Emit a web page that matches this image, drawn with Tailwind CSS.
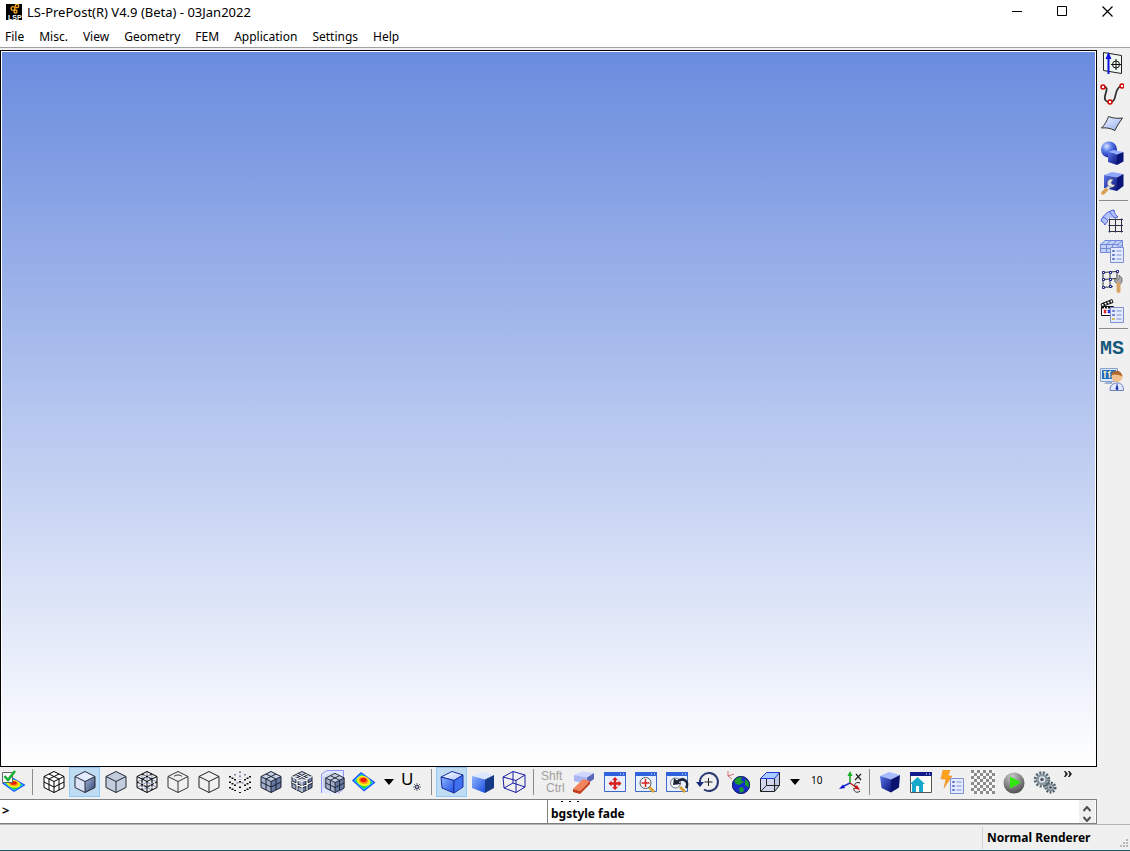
<!DOCTYPE html>
<html lang="en">
<head>
    <meta charset="UTF-8">
    <title>LS-PrePost(R) V4.9 (Beta) - 03Jan2022</title>
    <meta name="viewport" content="width=device-width, initial-scale=1">
    <script src="https://cdn.jsdelivr.net/npm/@tailwindcss/browser@4"></script>
</head>
<body class="h-screen flex flex-col overflow-hidden bg-[#f0f0f0] text-black text-[12px] leading-4 font-['Noto_Sans','Open_Sans',sans-serif]">
    <!-- Shared shapes and gradients -->
    <svg class="absolute w-0 h-0" aria-hidden="true">
        <defs>
            <linearGradient id="steel" x1="0" y1="0" x2="1" y2="1"><stop offset="0" stop-color="#a9b8d8"/><stop offset="1" stop-color="#2d4474"/></linearGradient>
            <linearGradient id="blueFace" x1="0" y1="0" x2="1" y2="1"><stop offset="0" stop-color="#8fb4ff"/><stop offset="1" stop-color="#1d4fe0"/></linearGradient>
            <linearGradient id="lightTop" x1="0" y1="0" x2="1" y2="1"><stop offset="0" stop-color="#ffffff"/><stop offset="1" stop-color="#a9c2ff"/></linearGradient>
            <linearGradient id="navyFace" x1="0" y1="0" x2="1" y2="1"><stop offset="0" stop-color="#5a74e8"/><stop offset="1" stop-color="#0a1478"/></linearGradient>
            <radialGradient id="ball" cx=".35" cy=".3" r=".75"><stop offset="0" stop-color="#dfe8ff"/><stop offset=".4" stop-color="#5f80ee"/><stop offset="1" stop-color="#0b1aa0"/></radialGradient>
            <radialGradient id="greyBall" cx=".4" cy=".2" r=".85"><stop offset="0" stop-color="#c8c8c8"/><stop offset="1" stop-color="#4a4a4a"/></radialGradient>
            <linearGradient id="sheet" x1="0" y1="0" x2="1" y2="1"><stop offset="0" stop-color="#f4f8ff"/><stop offset="1" stop-color="#8fabf0"/></linearGradient>
            <symbol id="edges" viewBox="0 0 24 24"><path d="M12 1.500 22 6.500V17.500L12 22.500 2 17.500V6.500ZM2 6.500 12 11.500 22 6.500M12 11.500V22.500" fill="none" stroke="currentColor" stroke-linejoin="round"/></symbol>
            <symbol id="grid" viewBox="0 0 24 24"><path d="M7 4 17 9V20M17 4 7 9V20M2 12 12 17 22 12" fill="none" stroke="currentColor"/></symbol>
            <symbol id="shaded" viewBox="0 0 24 24"><path d="M12 1.500 22 6.500 12 11.500 2 6.500Z" fill="#c6d0e4"/><path d="M2 6.500 12 11.500V22.500L2 17.500Z" fill="#a3b1cd"/><path d="M12 11.500 22 6.500V17.500L12 22.500Z" fill="#6679a0"/></symbol>
            <symbol id="fringe" viewBox="0 0 24 24" preserveAspectRatio="none">
                <path d="M0 10.500 9 2 23.500 12.500 12 21.500Z" fill="#1a4cff"/><path d="M1.800 10.500 9.300 3.600 21.500 12.500 12 20Z" fill="#1ecbff"/>
                <path d="M3.200 10.500 9.500 4.600 20 12.500 12 18.800Z" fill="#27d83c"/><ellipse cx="11.500" cy="11" rx="7" ry="4.900" transform="rotate(18 11.500 11)" fill="#f6f01c"/>
                <ellipse cx="11.500" cy="10.500" rx="4.800" ry="3.400" transform="rotate(18 11.500 10.500)" fill="#ff9a10"/><ellipse cx="11.500" cy="10" rx="3.200" ry="2.200" fill="#f01808"/>
            </symbol>
            <symbol id="navyCube" viewBox="0 0 24 24"><path d="M2 6 11 2 22 5 13 9.500Z" fill="#a7bbff"/><path d="M2 6 13 9.500V22.500L3.500 18Z" fill="url(#navyFace)"/><path d="M13 9.500 22 5 21 17.500 13 22.500Z" fill="#0a1270"/></symbol>
            <symbol id="list" viewBox="0 0 24 24"><path d="M10.500 8.500H23.500V23.500H10.500Z" fill="#e4ebff" stroke="#7f8fd0"/><path d="M12.500 11.500h2v1h-2zM12.500 15.500h2v1h-2zM12.500 19.500h2v1h-2z" fill="#fff" stroke="#6076c8"/><path d="M16.500 12H21.500M16.500 16H21.500M16.500 20H21.500" stroke="#7f8fd0"/></symbol>
            <symbol id="window" viewBox="0 0 24 24"><path d="M1.500 2.500H22.500V21.500H1.500Z" fill="#e8f0ff" stroke="#3f67c4"/><path d="M1 2H23V6H1Z" fill="#2f62dc"/><path d="M17 4H18M20 4H21" stroke="#fff"/></symbol>
        </defs>
    </svg>

    <!-- Title bar -->
    <header class="flex items-center justify-between bg-white h-6 shrink-0 pr-px">
        <div class="flex items-center gap-[5px] pl-1.5">
            <svg class="size-4" viewBox="0 0 16 16" aria-hidden="true">
                <rect width="16" height="16" fill="#000"/>
                <g fill="none" stroke="#f5a21c" stroke-width="1.400"><circle cx="11" cy="2" r="1.700"/><circle cx="7" cy="4.500" r="1.900"/><circle cx="9.500" cy="7.500" r="1.500"/></g>
                <text x="2" y="15.500" font-size="7" font-weight="700" font-family="Liberation Sans" fill="#fff">LSP</text>
            </svg>
            <h1 class="text-[13px]">LS-PrePost(R) V4.9 (Beta) - 03Jan2022</h1>
        </div>
        <div class="flex">
            <button aria-label="Minimize" class="w-[45px] h-6 flex items-center justify-center"><svg class="size-3" viewBox="0 0 12 12"><path d="M1 5.500H11" stroke="#000"/></svg></button>
            <button aria-label="Maximize" class="w-[45px] h-6 flex items-center justify-center"><svg class="size-3" viewBox="0 0 12 12"><path d="M1.500 .5H10.500V9.500H1.500Z" fill="none" stroke="#000"/></svg></button>
            <button aria-label="Close" class="w-[45px] h-6 flex items-center justify-center"><svg class="size-3" viewBox="0 0 12 12"><path d="M1.500 .5 11.500 10.500M11.500 .5 1.500 10.500" stroke="#000" stroke-width="1.200"/></svg></button>
        </div>
    </header>

    <!-- Menu -->
    <nav class="flex items-center gap-[15px] bg-white h-[23px] pl-[5px] pt-[3px] shrink-0">
        <a href="#">File</a>
        <a href="#">Misc.</a>
        <a href="#">View</a>
        <a href="#">Geometry</a>
        <a href="#">FEM</a>
        <a href="#">Application</a>
        <a href="#">Settings</a>
        <a href="#">Help</a>
    </nav>

    <div class="flex flex-1 min-h-0 border-t border-[#a0a0a0]">
        <!-- Graphics view -->
        <div class="flex flex-col flex-1 min-w-0 pt-0.5">
            <main class="flex-1 border border-black bg-white p-px"><div class="h-full bg-linear-to-b/srgb from-[#6a8cde] to-white"></div></main>
        </div>

        <!-- Right toolbar -->
        <aside class="w-[33px] shrink-0 flex flex-col items-start">
            <button aria-label="Reference geometry" class="w-[30px] h-[30px] flex items-center justify-center"><svg class="size-6" viewBox="0 0 24 24">
                <path d="M3.500 1.500 21.500 4.500V22.500L3.500 19.500Z" fill="#eef8ee" stroke="#222"/><path d="M8.500 23V5" stroke="#1010e0" stroke-width="2"/><path d="M8.500 1 11.500 8H5.500Z" fill="#1010e0"/><circle cx="16" cy="13.500" r="3.500" fill="none" stroke="#111"/><path d="M16 8V19M11 13.500H21" stroke="#111"/></svg></button>
            <button aria-label="Curve" class="w-[30px] h-[30px] flex items-center justify-center"><svg class="size-6" viewBox="0 0 24 24">
                <path d="M3 6C9 5 6 11 5 15 4 19 6 21 10 21 18 21 13 8 21 5" fill="none" stroke="#333" stroke-width="1.800"/><g fill="#fff" stroke="#d00000" stroke-width="1.500"><circle cx="3" cy="6" r="2"/><circle cx="10" cy="21" r="2"/><circle cx="22" cy="5" r="2"/></g></svg></button>
            <button aria-label="Surface" class="w-[30px] h-[30px] flex items-center justify-center"><svg class="size-6" viewBox="0 0 24 24">
                <path d="M1.500 17C4.500 14 7 10 8.500 5.500 13 7.500 18 7.500 22.500 7 20 11 17 14.500 15 19.500 10 17 6 16.500 1.500 17Z" fill="url(#sheet)" stroke="#333"/></svg></button>
            <button aria-label="Solid" class="w-[30px] h-[30px] flex items-center justify-center"><svg class="size-6" viewBox="0 0 24 24">
                <circle cx="9" cy="8.500" r="8" fill="url(#ball)"/><path d="M8 11 14 9 23.500 11 17 13.500Z" fill="#98b0ff"/><path d="M8 11 17 13.500V24L8 21Z" fill="url(#navyFace)"/><path d="M17 13.500 23.500 11V20.500L17 24Z" fill="#0a1478"/></svg></button>
            <button aria-label="Geometry tools" class="w-[30px] h-[30px] flex items-center justify-center"><svg class="size-6" viewBox="0 0 24 24">
                <path d="M4 4 12 1 23.500 3 17 6.500Z" fill="#8fa8f8"/><path d="M4 4 17 6.500V20L4 17Z" fill="url(#navyFace)"/><path d="M17 6.500 23.500 3V15L17 20Z" fill="#0a1478"/><path d="M3 22 7 18" stroke="#d9a050" stroke-width="3.500" stroke-linecap="round"/><path d="M7 18 11 14" stroke="#d8d8d8" stroke-width="3"/><path d="M13 8.500A4 4 0 1 0 15 14L12 13.500 11 11.500Z" fill="#e8e8e8" stroke="#777" stroke-width=".6"/></svg></button>
            <hr class="w-[29px] ml-0.5 mt-0.5 mb-[5px] border-[#8c8c8c]">
            <button aria-label="Element mesh" class="w-[30px] h-[30px] flex items-center justify-center"><svg class="size-6" viewBox="0 0 24 24">
                <path d="M1 12C3 6 8 2 14 1 14 5 17 7 18 8 12 9 7 12 5 16 4 13 2 13 1 12Z" fill="#b4c2fc" stroke="#4858d8"/><path d="M3 8C6 9 7 11 8 12M10 3C11 6 14 8 15 9" fill="none" stroke="#5060e0"/><path d="M8 9H23V24H8Z" fill="#eee"/><path d="M9 10.500H23M9 16.500H23M9 22.500H23M9.500 10V23M15.500 10V23M21.500 10V23" stroke="#333"/><path d="M9 10h1v1H9zM15 10h1v1h-1zM21 10h1v1h-1zM9 16h1v1H9zM15 16h1v1h-1zM21 16h1v1h-1zM9 22h1v1H9zM15 22h1v1h-1zM21 22h1v1h-1z" fill="#8890d8" stroke="#23286a"/></svg></button>
            <button aria-label="Model and part" class="w-[30px] h-[30px] flex items-center justify-center"><svg class="size-6" viewBox="0 0 24 24">
                <path d="M.5 5.500 5 1.500H22.500V9L18 13.500H.5Z" fill="#c3d0fa" stroke="#7088d8"/><path d="M.5 5.500H18L22.500 1.500M18 5.500V13M.5 9.500H18L22.500 5.500M6.500 5.500V13M12.500 5.500V13M6.500 5.500 11 1.500M12.500 5.500 17 1.500" fill="none" stroke="#7088d8"/><use href="#list"/></svg></button>
            <button aria-label="Element tools" class="w-[30px] h-[30px] flex items-center justify-center"><svg class="size-6" viewBox="0 0 24 24">
                <path d="M3 3.500 17 2.500M3 10.500 16 9.500M3 18.500 13 17.500M3 3V18M10 3V18M17 2V10" stroke="#333"/><g fill="#fff" stroke="#1c2390"><path d="M2.500 2.500h2v2h-2zM9.500 2.500h2v2h-2zM16.500 1.500h2v2h-2zM2.500 9.500h2v2h-2zM9.500 9.500h2v2h-2zM2.500 17.500h2v2h-2zM9.500 16.500h2v2h-2z"/></g><path d="M19 6 22 9V13L19.500 16 15 13 14 9 17 11 19 10Z" fill="#aaa" stroke="#555" stroke-width=".7"/><path d="M18.500 15V22" stroke="#d8a568" stroke-width="4" stroke-linecap="round"/></svg></button>
            <button aria-label="Post" class="w-[30px] h-[30px] flex items-center justify-center"><svg class="size-6" viewBox="0 0 24 24">
                <path d="M1 5 12 .5 13 3.500 2 7.500Z" fill="#fff" stroke="#111"/><path d="M3 4 5 6M6 3 8 5M9 2 11 4" stroke="#111" stroke-width="1.500"/><path d="M1.500 7.500H13.500V16.500H1.500Z" fill="#fff" stroke="#111"/><path d="M2 8.500H14" stroke="#111" stroke-width="2" stroke-dasharray="2 1"/><path d="M4 11 6 14M6 11 4 14" stroke="#e02020" stroke-width="1.500"/><path d="M8 11 10 14M10 11 8 14" stroke="#2030e0" stroke-width="1.500"/><use href="#list"/><path d="M12.500 19.500h2v1h-2z" stroke="#e8d040"/></svg></button>
            <hr class="w-[29px] ml-0.5 mt-0.5 mb-[5px] border-[#8c8c8c]">
            <button class="w-[30px] h-[30px] flex items-center justify-center text-[20px] leading-6 font-bold text-[#155a7c] font-['Liberation_Mono',monospace]">MS</button>
            <button aria-label="Favorites" class="w-[30px] h-[30px] flex items-center justify-center"><svg class="size-6" viewBox="0 0 24 24">
                <path d="M.5 1.500H17.500V14.500H.5Z" fill="#dceaff" stroke="#8aa0c8"/><path d="M2 3H16V12H2Z" fill="#1f6fc0"/><path d="M5 4V11M3.500 5H6.500M9.500 4V11M8 6 11 4" stroke="#f5e6c0" stroke-width="1.500"/><path d="M6 15H12V17H4Z" fill="#9fb0d0"/><circle cx="17" cy="9.500" r="5.500" fill="#f0c090"/><path d="M11 8.500C12 2.500 21 1.500 22.500 9.500 19 7.500 14 6.500 11 8.500Z" fill="#b0662c"/><path d="M10 23.500C10 18 13 16 17 16S23.500 18 23.500 23.500Z" fill="#dfe8ff" stroke="#7080b8"/><path d="M17 16 18.500 22 17 23.500 15.500 22Z" fill="#2038b0"/></svg></button>
        </aside>
    </div>

    <!-- Bottom toolbar -->
    <div class="flex items-start h-8 shrink-0" role="toolbar" aria-label="Rendering">
        <button aria-label="Fringe on" class="w-7 h-[30px] flex items-center justify-center"><svg class="size-6" viewBox="0 0 24 24">
            <use href="#fringe" x="0" y="5" width="24" height="19"/><path d="M.5 2.500H10.500V12.500H.5Z" fill="#f8f8f8" stroke="#666"/><path d="M2.500 6 6 10 13 1" fill="none" stroke="#12b030" stroke-width="2.500"/></svg></button>
        <span class="w-px h-[26px] mt-0.5 ml-1 mr-[5px] bg-[#8c8c8c]"></span>
        <button aria-label="Mesh" class="w-[31px] h-[30px] flex items-center justify-center"><svg class="size-6 text-black" viewBox="0 0 24 24"><path d="M12 1.500 22 6.500V17.500L12 22.500 2 17.500V6.500Z" fill="#fff"/><use href="#edges"/><use href="#grid"/></svg></button>
        <button aria-label="Shaded edge" aria-pressed="true" class="w-[31px] h-[30px] flex items-center justify-center bg-[#c0dcf3] border border-[#90c8f6]"><svg class="size-6 text-[#222833]" viewBox="0 0 24 24"><path d="M12 1.500 22 6.500 12 11.500 2 6.500Z" fill="#e6ecff"/><path d="M2 6.500 12 11.500V22.500L2 17.500Z" fill="#dde4fa"/><path d="M12 11.500 22 6.500V17.500L12 22.500Z" fill="url(#steel)"/><use href="#edges"/></svg></button>
        <button aria-label="Flat shaded" class="w-[31px] h-[30px] flex items-center justify-center"><svg class="size-6 text-[#222833]" viewBox="0 0 24 24"><path d="M12 1.500 22 6.500V17.500L12 22.500 2 17.500V6.500Z" fill="#c3ccdd"/><use href="#edges"/></svg></button>
        <button aria-label="Wireframe" class="w-[31px] h-[30px] flex items-center justify-center"><svg class="size-6" viewBox="0 0 24 24"><path d="M12 1V12L2 17.500M12 12 22 17.500M7 4V15L17 20M17 4V15L7 20M2 12 12 7 22 12" fill="none" stroke="#8593ba"/><use href="#edges" class="text-black"/><use href="#grid" class="text-black" stroke-dasharray="3 1"/></svg></button>
        <button aria-label="Feature line" class="w-[31px] h-[30px] flex items-center justify-center"><svg class="size-6 text-[#333]" viewBox="0 0 24 24"><use href="#edges"/><path d="M8 6.500C10 4.500 14 4.500 16 6.500" fill="none" stroke="#333"/></svg></button>
        <button aria-label="Edge" class="w-[31px] h-[30px] flex items-center justify-center"><svg class="size-6 text-[#222]" viewBox="0 0 24 24"><use href="#edges"/></svg></button>
        <button aria-label="Grid points" class="w-[31px] h-[30px] flex items-center justify-center"><svg class="size-6" viewBox="0 0 24 24" fill="none" stroke-width="2"><path d="M12 1.500V10M7 4V8M17 4V8M9.500 12V14M14.500 12V14" stroke="#7a86a8" stroke-dasharray="1.500 2.500"/><path d="M2 6V18.500M22 6V18.500M7 9V21M17 9V21M12 11V23M4.500 7.500V20M19.500 7.500V20" stroke="#111" stroke-dasharray="1.500 4"/></svg></button>
        <button aria-label="Shaded mesh" class="w-[31px] h-[30px] flex items-center justify-center"><svg class="size-6 text-[#1a2030]" viewBox="0 0 24 24"><use href="#shaded"/><use href="#edges"/><use href="#grid"/></svg></button>
        <button aria-label="Shrink" class="w-[31px] h-[30px] flex items-center justify-center"><svg class="size-6" viewBox="0 0 24 24"><use href="#shaded"/><g class="text-[#1a2030]" stroke-width="3"><use href="#edges" stroke-width="1"/><use href="#grid"/></g><path d="M7 4 17 9V20M17 4 7 9V20M2 12 12 17 22 12M2 6.500 12 11.500 22 6.500M12 11.500V22" fill="none" stroke="#fff" stroke-width="1.200"/></svg></button>
        <button aria-label="Section" class="w-[31px] h-[30px] flex items-center justify-center"><svg class="size-6" viewBox="0 0 24 24"><path d="M.5 23V4L6 .5H22.500V19L17 23.500" fill="#e2e8ff" stroke="#8d96f0"/><use href="#shaded" opacity=".5"/><g class="text-[#1a2030]"><use href="#shaded" x="3" y="2" width="22" height="22"/><use href="#edges" x="3" y="2" width="22" height="22"/><use href="#grid" x="3" y="2" width="22" height="22"/></g></svg></button>
        <button aria-label="Fringe" class="w-[31px] h-[30px] flex items-center justify-center"><svg class="size-6" viewBox="0 0 24 24"><use href="#fringe"/></svg></button>
        <button aria-label="Fringe options" class="w-5 h-[30px] flex items-center justify-center"><svg class="w-2.5 h-1.5" viewBox="0 0 10 6"><path d="M0 0H10L5 6Z"/></svg></button>
        <button aria-label="Unreferenced nodes" class="w-7 h-[30px] flex items-center pl-0.5"><span class="text-[17px] leading-5 pb-1.5">U</span><svg class="size-2 mt-2.5" viewBox="0 0 8 8"><path d="M4 0V8M0 4H8M1 1 7 7M7 1 1 7" stroke="#667"/><circle cx="4" cy="4" r="1.500" fill="#dfe4ff" stroke="#335"/></svg></button>
        <span class="w-px h-[26px] mt-0.5 mx-1 bg-[#8c8c8c]"></span>
        <button aria-label="Smooth shaded edge" aria-pressed="true" class="w-[31px] h-[30px] flex items-center justify-center bg-[#c0dcf3] border border-[#90c8f6]"><svg class="size-6" viewBox="0 0 24 24" stroke="#1a2ea0" stroke-linejoin="round"><path d="M1 7 12 1.500 23 5 14 10.500Z" fill="url(#lightTop)"/><path d="M1 7 14 10.500V23L2 18Z" fill="url(#blueFace)"/><path d="M14 10.500 23 5V17L14 23Z" fill="#3f70f0"/></svg></button>
        <button aria-label="Smooth shaded" class="w-[31px] h-[30px] flex items-center justify-center"><svg class="size-6" viewBox="0 0 24 24"><path d="M1 6 11 2 23 5 14 9.500Z" fill="#dbe6ff"/><path d="M1 6 14 9.500V23L1 18Z" fill="url(#blueFace)"/><path d="M14 9.500 23 5V18L14 23Z" fill="#173a86"/></svg></button>
        <button aria-label="Smooth wireframe" class="w-[31px] h-[30px] flex items-center justify-center"><svg class="size-6" viewBox="0 0 24 24"><path d="M1 7 11 1.500 23 5 14 10.500ZM1 7 2 18 14 22.500 23 17V5M14 10.500V22.500M11 1.500V13L2 18M11 13 23 17" fill="none" stroke="#1a1ea8"/></svg></button>
        <span class="w-px h-[26px] mt-0.5 mx-1 bg-[#8c8c8c]"></span>
        <button class="w-[30px] h-[30px] flex flex-col pl-[3px] text-left text-[12px] leading-3 pt-[3px] text-[#a0a0a0] font-['Liberation_Sans',sans-serif]"><span>Shft</span><span class="pl-[5px]">Ctrl</span></button>
        <button aria-label="Erase" class="w-[31px] h-[30px] flex items-center justify-center"><svg class="size-6" viewBox="0 0 24 24"><path d="M2 5 10 1.500 22 3 15 7.500Z" fill="#cfd6ff"/><path d="M2 5 15 7.500V14L2 11Z" fill="#a9b6f2"/><path d="M15 7.500 22 3V9L15 14Z" fill="#5968b8"/><path d="M1 19 11 9 18 11 8 21Z" fill="#f4845c"/><path d="M1 19 8 21V24L1 22ZM8 21 18 11V14L8 24Z" fill="#c43e1c"/></svg></button>
        <button aria-label="Auto center" class="w-[31px] h-[30px] flex items-center justify-center"><svg class="size-6" viewBox="0 0 24 24"><use href="#window"/><path d="M12 9V18M7 13.500H17" stroke="#d82020" stroke-width="2.500"/><path d="M12 7 15 10H9ZM12 20 9 17H15ZM5.500 13.500 8.500 10.500V16.500ZM18.500 13.500 15.500 16.500V10.500Z" fill="#d82020"/></svg></button>
        <button aria-label="Zoom in" class="w-[31px] h-[30px] flex items-center justify-center"><svg class="size-6" viewBox="0 0 24 24"><use href="#window"/><path d="M15 17 20 22" stroke="#d8a030" stroke-width="3"/><circle cx="11.500" cy="13" r="5.500" fill="#f4f8ff" stroke="#555"/><path d="M11.500 9V17M7.500 13H15.500" stroke="#d82020" stroke-width="1.500"/></svg></button>
        <button aria-label="Previous view" class="w-[31px] h-[30px] flex items-center justify-center"><svg class="size-6" viewBox="0 0 24 24"><use href="#window"/><path d="M15 17 20 22" stroke="#d8a030" stroke-width="3"/><circle cx="10.500" cy="13" r="5" fill="#f4f8ff" stroke="#777"/><path d="M21 18C25 12 18 6 12 12" fill="none" stroke="#1c2536" stroke-width="2.500"/><path d="M8 15 9 8 16 14Z" fill="#1c2536"/></svg></button>
        <button aria-label="Rotate" class="w-[31px] h-[30px] flex items-center justify-center"><svg class="size-6" viewBox="0 0 24 24"><path d="M4 13A9 9 0 1 1 8 19.500" fill="none" stroke="#2b3a72" stroke-width="2"/><path d="M0 12H8L4 17Z" fill="#1a2c78"/><path d="M12.500 8V16M8.500 12H16.500" stroke="#222"/></svg></button>
        <button aria-label="Global view" class="w-[31px] h-[30px] flex items-center justify-center"><svg class="size-6" viewBox="0 0 24 24"><path d="M1 1V6L5 9M1 6 7 4" fill="none" stroke="#d07070"/><circle cx="14" cy="15" r="9" fill="#1a2cc8"/><path d="M7 11C9 6 13 6 15 7L14 10 17 12 12 15 9 14ZM18 9 22 12 22 18 18 15ZM12 18 16 17 17 21 13 23Z" fill="#1c9c2c"/><circle cx="14" cy="15" r="8.500" fill="none" stroke="#142068"/></svg></button>
        <button aria-label="View orientation" class="w-[31px] h-[30px] flex items-center justify-center"><svg class="size-6" viewBox="0 0 24 24"><path d="M2.500 8.500H16.500V21.500H2.500Z" fill="#d4d8ee"/><path d="M16.500 8.500 21.500 2.500V15.500L16.500 21.500Z" fill="#c0c8e8"/><path d="M2.500 8.500 8.500 2.500H21.500L16.500 8.500Z" fill="#a8ccff" stroke="#2038e0"/><path d="M2.500 8.500V21.500H16.500V8.500M16.500 21.500 21.500 15.500V2.500M8.500 9V15.500H21M8.500 15.500 2.500 21.500" fill="none" stroke="#222"/></svg></button>
        <button aria-label="More views" class="w-5 h-[30px] flex items-center justify-center"><svg class="w-2.5 h-1.5" viewBox="0 0 10 6"><path d="M0 0H10L5 6Z"/></svg></button>
        <button class="w-[30px] h-[30px] flex items-center pl-1.5 pb-1 text-[10px]">10</button>
        <button aria-label="Axis rotation" class="w-[31px] h-[30px] flex items-center justify-center"><svg class="size-6" viewBox="0 0 24 24"><path d="M11 13V4" stroke="#10a020" stroke-width="1.500"/><path d="M11 1 13.500 6H8.500Z" fill="#10b020"/><path d="M11 13 3 17" stroke="#1830d0" stroke-width="1.500"/><path d="M0 19 4 14.500 6 18Z" fill="#1010d0"/><path d="M11 13 18 18" stroke="#d02020" stroke-width="1.500"/><path d="M21 20 15 18.500 18 15Z" fill="#d01010"/><path d="M17 4 22 10M22 4 16 10" stroke="#222" stroke-width="1.200"/><path d="M21 13C17 11 14 15 17 17M15 18C14 21 18 24 21 21" fill="none" stroke="#222"/></svg></button>
        <span class="w-px h-[26px] mt-0.5 ml-[3px] mr-1 bg-[#8c8c8c]"></span>
        <button aria-label="Solid view" class="w-[31px] h-[30px] flex items-center justify-center"><svg class="size-6" viewBox="0 0 24 24"><use href="#navyCube"/></svg></button>
        <button aria-label="Home" class="w-[31px] h-[30px] flex items-center justify-center"><svg class="size-6" viewBox="0 0 24 24"><path d="M1.500 2.500H22.500V22.500H1.500Z" fill="#fffdf8" stroke="#555"/><path d="M1 2H23V6H1Z" fill="#141c8c"/><path d="M17 4H18M20 4H21" stroke="#fff"/><path d="M1 14 8.500 7 16 14H14V22H10V16H7V22H3V14Z" fill="#18a8cc"/></svg></button>
        <button aria-label="Quick settings" class="w-[31px] h-[30px] flex items-center justify-center"><svg class="size-6" viewBox="0 0 24 24"><path d="M3 0H10L8 6H12L4 18 6 9H1Z" fill="#ffa31c" stroke="#e8892c" stroke-width=".6"/><use href="#list"/></svg></button>
        <button aria-label="Transparency" class="w-[31px] h-[30px] flex items-center justify-center"><svg class="size-6" viewBox="0 0 24 24"><defs><pattern id="checks" width="6" height="6" patternUnits="userSpaceOnUse"><path d="M0 0H3V3H0ZM3 3H6V6H3Z" fill="#8c8c8c"/><path d="M3 0H6V3H3ZM0 3H3V6H0Z" fill="#f6f6f6"/></pattern></defs><rect width="24" height="24" fill="url(#checks)"/></svg></button>
        <button aria-label="Run" class="w-[31px] h-[30px] flex items-center justify-center"><svg class="size-6" viewBox="0 0 24 24"><circle cx="12" cy="13" r="10.500" fill="url(#greyBall)"/><path d="M8 6.500 19 12.500 8 18.500Z" fill="#30e810"/></svg></button>
        <button aria-label="Settings" class="w-[31px] h-[30px] flex items-center justify-center"><svg class="size-6" viewBox="0 0 24 24" fill="none"><circle cx="9" cy="9.500" r="6.500" stroke="#5c6c74" stroke-width="3.500" stroke-dasharray="2 1.400"/><circle cx="9" cy="9.500" r="4.500" fill="#dfe6ea" stroke="#8796a0" stroke-width="2.500"/><circle cx="9" cy="9.500" r="1.800" fill="#556"/><circle cx="17.500" cy="17.500" r="4.500" stroke="#4c5c64" stroke-width="3" stroke-dasharray="1.800 1.200"/><circle cx="17.500" cy="17.500" r="3" fill="#c8d2d8" stroke="#7d8c94" stroke-width="1.500"/><circle cx="17.500" cy="17.500" r="1.200" fill="#334"/></svg></button>
        <button aria-label="More tools" class="w-4 h-[30px] flex items-start pl-1 pt-1"><svg class="w-2 h-1.5" viewBox="0 0 8 6"><path d="M0 0H1.500L4 3 1.500 6H0L1.500 3ZM4 0H5.500L8 3 5.500 6H4L5.500 3Z" fill="#222"/></svg></button>
    </div>

    <!-- Command line and message log -->
    <div class="flex h-[25px] shrink-0 mr-[33px] border-y border-[#808080] bg-white font-bold">
        <label for="command" class="pl-0.5 pt-0.5 text-[13px]">&gt;</label>
        <input id="command" type="text" class="flex-1 min-w-0 font-normal outline-none">
        <div class="w-[550px] shrink-0 flex border-x border-[#808080] overflow-hidden">
            <div class="flex-1 flex flex-col justify-between pl-[3px] pb-px">
                <!-- bottom of the line that has scrolled out -->
                <div class="flex gap-1.5 pl-2.5 pt-px"><span class="w-0.5 h-px bg-black"></span><span class="w-0.5 h-px bg-black"></span><span class="w-0.5 h-px bg-black"></span></div>
                <p>bgstyle fade</p>
            </div>
            <div class="w-4 mr-px bg-[#f0f0f0] flex flex-col items-center justify-between pt-1.5 pb-px">
                <button aria-label="Scroll up" class="flex"><svg class="w-2 h-1.5" viewBox="0 0 8 6"><path d="M.5 5 4 1 7.500 5" fill="none" stroke="#505050" stroke-width="2"/></svg></button>
                <button aria-label="Scroll down" class="flex"><svg class="w-2 h-1.5" viewBox="0 0 8 6"><path d="M.5 1 4 5 7.500 1" fill="none" stroke="#505050" stroke-width="2"/></svg></button>
            </div>
        </div>
    </div>

    <!-- Status bar -->
    <footer class="flex justify-end h-[27px] shrink-0 border-t border-t-[#b4b4b4] border-b border-b-[#1b5a66]">
        <div class="w-[148px] mt-0.5 mb-px pl-1 flex items-center justify-between border-l border-[#d4d4d4] font-bold">
            <span class="whitespace-nowrap">Normal Renderer</span>
            <svg class="size-2.5 self-end shrink-0" viewBox="0 0 10 10" fill="#b8b8b8"><path d="M6 0h2v2H6zM3 3h2v2H3zM6 3h2v2H6zM0 6h2v2H0zM3 6h2v2H3zM6 6h2v2H6z"/></svg>
        </div>
    </footer>
</body>
</html>
